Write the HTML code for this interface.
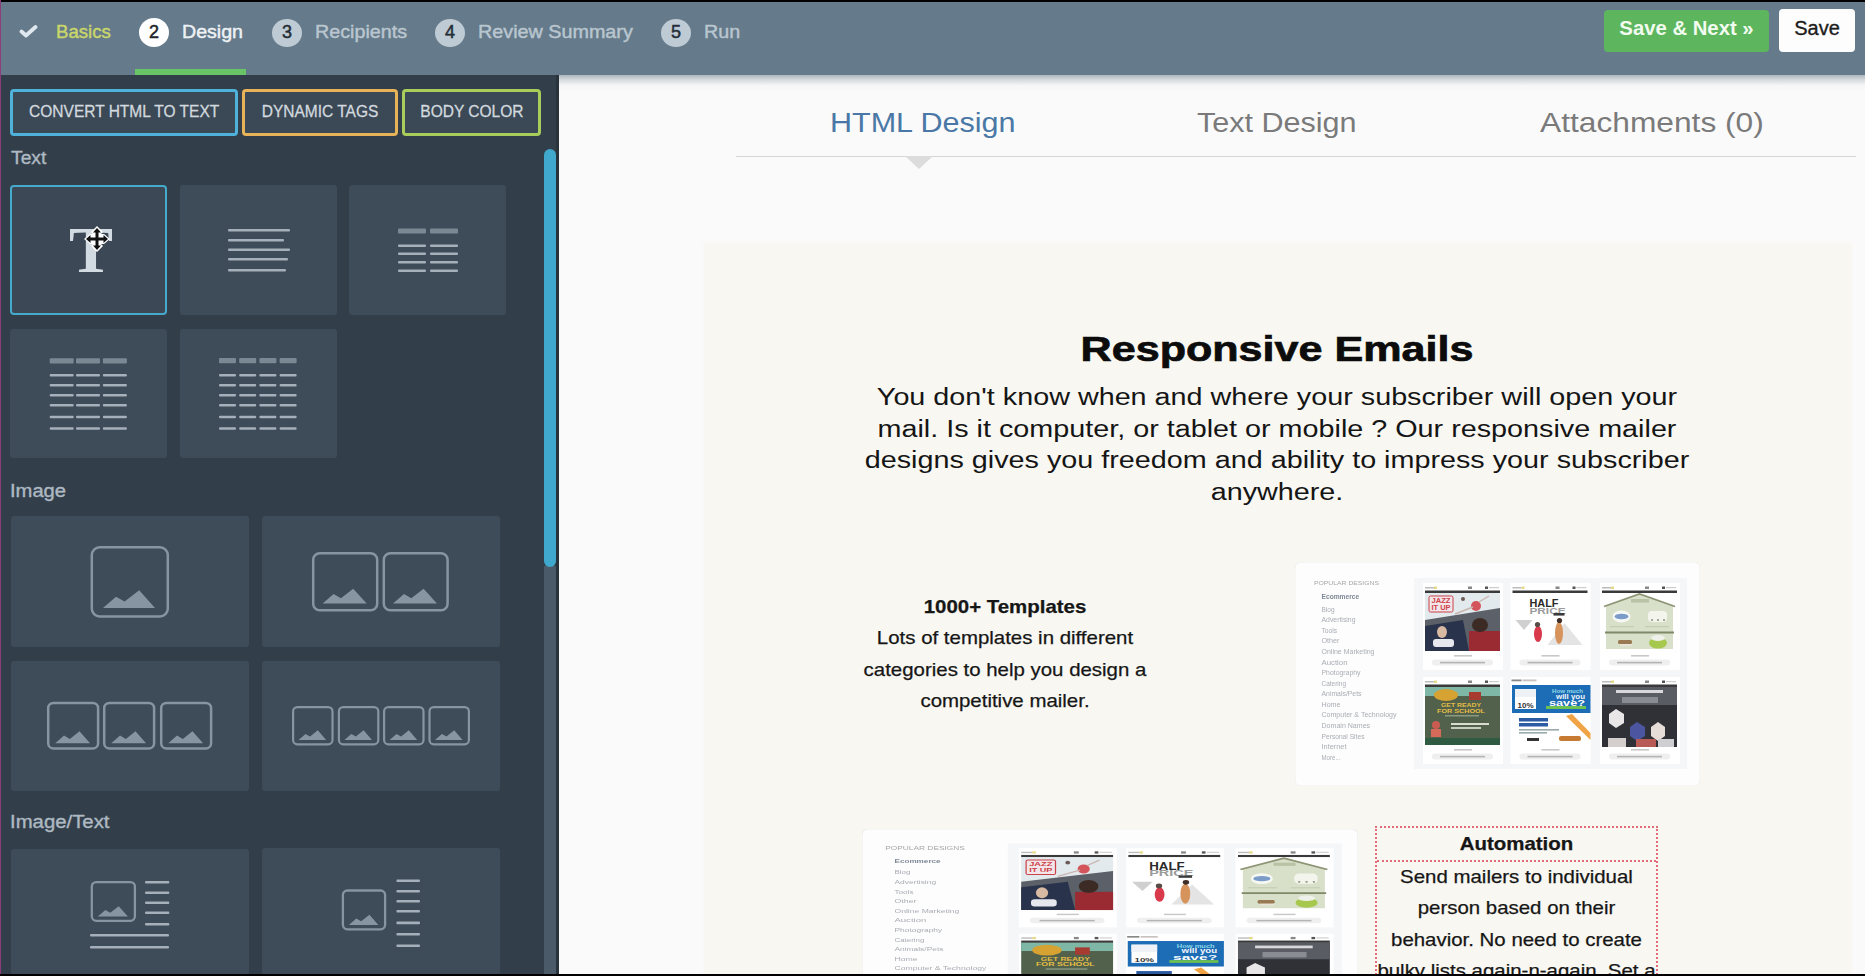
<!DOCTYPE html>
<html><head><meta charset="utf-8">
<style>
*{margin:0;padding:0;box-sizing:border-box}
html,body{width:1865px;height:976px;overflow:hidden;background:#000;font-family:"Liberation Sans",sans-serif}
.a{position:absolute}
#root{position:absolute;left:0;top:0;width:1865px;height:976px;overflow:hidden;background:#fafafa}
#topb{left:0;top:0;width:1865px;height:2px;background:#000}
#botb{left:0;top:974px;width:1865px;height:2px;background:#000}
#lb{left:0;top:0;width:1px;height:976px;background:#8a3d78}
#hdr{left:1px;top:2px;width:1864px;height:73px;background:#657a8a}
.step{position:absolute;top:0;height:72px;font-size:19px;line-height:72px;white-space:nowrap}
.circ{position:absolute;top:15px;width:30px;height:28px;border-radius:50%;background:#bfcbd4;color:#252e38;font-size:18px;line-height:27px;text-align:center;-webkit-text-stroke:0.5px currentColor}
.stxt{position:absolute;top:15.5px;line-height:32px;font-size:18.6px;color:#b9c6cf;white-space:nowrap;-webkit-text-stroke:0.45px currentColor}
#side{left:1px;top:75px;width:558px;height:899px;background:#323f4b}
.btn{position:absolute;border:3px solid;border-radius:4px;background:#3b4855;color:#d2d9df;font-size:16.5px;text-align:center;line-height:39px;white-space:nowrap}
.btn span{display:inline-block;transform:scaleX(0.94);-webkit-text-stroke:0.3px currentColor}
.lbl{position:absolute;color:#aeb9c2;font-size:18px;white-space:nowrap;transform:scaleX(1.07);transform-origin:0 0;-webkit-text-stroke:0.35px currentColor}
.tile{position:absolute;background:#3e4b58;border-radius:3px}
.ln{position:absolute;height:3px;background:#a8b3bd;border-radius:1px}
.hd{position:absolute;height:5px;background:#687886}
#content{left:559px;top:75px;width:1306px;height:899px;background:#fafafa}
.tab{position:absolute;top:103px;font-size:27.5px;line-height:40px;white-space:nowrap;color:#7a7a7a;transform-origin:0 0}
</style></head><body>
<div id="root">
<div id="hdr" class="a"></div>
<div id="topb" class="a"></div>
<div id="lb" class="a"></div>

<!-- steps -->
<svg class="a" style="left:19px;top:24px" width="20" height="15" viewBox="0 0 20 15"><path d="M2.5 7.5 L7 11.5 L16.5 3" fill="none" stroke="#dfe8ee" stroke-width="3.8" stroke-linecap="round" stroke-linejoin="round"/></svg>
<div class="stxt" style="left:56px;color:#c9d66b">Basics</div>
<div class="circ" style="left:139px;top:18px;height:29px;line-height:28px;background:#fff;color:#1d232a">2</div>
<div class="stxt" style="left:182px;color:#eef2f5;transform:scaleX(1.054);transform-origin:0 0">Design</div>
<div class="a" style="left:135px;top:69px;width:111px;height:6px;background:#69c468"></div>
<div class="circ" style="left:272px;top:18.5px">3</div>
<div class="stxt" style="left:315px;transform:scaleX(1.06);transform-origin:0 0">Recipients</div>
<div class="circ" style="left:435px;top:18.5px">4</div>
<div class="stxt" style="left:478px;transform:scaleX(1.0625);transform-origin:0 0">Review Summary</div>
<div class="circ" style="left:661px;top:18.5px">5</div>
<div class="stxt" style="left:704px;transform:scaleX(1.06);transform-origin:0 0">Run</div>

<div class="a" style="left:1604px;top:10px;width:165px;height:42px;background:#5db65e;border-radius:4px;color:#f2fbef;font-weight:bold;font-size:20.5px;line-height:36px;text-align:center"><div style="transform:scaleX(0.99)">Save &amp; Next &raquo;</div></div>
<div class="a" style="left:1779px;top:9px;width:76px;height:43px;background:#fdfdfd;border-radius:4px;color:#1c1c1c;font-size:20px;line-height:38px;text-align:center;-webkit-text-stroke:0.35px currentColor">Save</div>

<!-- sidebar -->
<div id="side" class="a"></div>
<div class="btn" style="left:10px;top:89px;width:228px;height:47px;border-color:#4fb2da"><span>CONVERT HTML TO TEXT</span></div>
<div class="btn" style="left:242px;top:89px;width:156px;height:47px;border-color:#e8b259"><span>DYNAMIC TAGS</span></div>
<div class="btn" style="left:402px;top:89px;width:139px;height:47px;border-color:#a9cd5a"><span>BODY COLOR</span></div>

<div class="lbl" style="left:11px;top:147.5px">Text</div>
<div class="lbl" style="left:10px;top:480.5px;transform:scaleX(1.12)">Image</div>
<div class="lbl" style="left:10px;top:812px;transform:scaleX(1.13)">Image/Text</div>

<!--SIDE-->
<div class="tile" style="left:10px;top:185px;width:157px;height:130px;background:#3c4855;border:2px solid #46abcb;border-radius:4px"></div>
<div class="tile" style="left:180px;top:185px;width:157px;height:130px;"></div>
<div class="tile" style="left:349px;top:185px;width:157px;height:130px;"></div>
<div class="tile" style="left:10px;top:329px;width:157px;height:129px;"></div>
<div class="tile" style="left:180px;top:329px;width:157px;height:129px;"></div>
<div class="tile" style="left:11px;top:516px;width:238px;height:131px;"></div>
<div class="tile" style="left:262px;top:516px;width:238px;height:131px;"></div>
<div class="tile" style="left:11px;top:661px;width:238px;height:130px;"></div>
<div class="tile" style="left:262px;top:661px;width:238px;height:130px;"></div>
<div class="tile" style="left:11px;top:849px;width:238px;height:130px;"></div>
<div class="tile" style="left:262px;top:848px;width:238px;height:130px;"></div>
<svg class="a" style="left:0;top:0" width="560" height="976"><rect x="228" y="229" width="62" height="2.6" fill="#a5b0ba" rx="1"/><rect x="228" y="239" width="56" height="2.6" fill="#a5b0ba" rx="1"/><rect x="228" y="248.5" width="62" height="2.6" fill="#a5b0ba" rx="1"/><rect x="228" y="258" width="60" height="2.6" fill="#a5b0ba" rx="1"/><rect x="228" y="269" width="58" height="2.6" fill="#a5b0ba" rx="1"/><rect x="398" y="228.5" width="28" height="5" fill="#7a8894" rx="1"/><rect x="398" y="244.5" width="28" height="2.6" fill="#a5b0ba" rx="1"/><rect x="398" y="252.5" width="28" height="2.6" fill="#a5b0ba" rx="1"/><rect x="398" y="261" width="28" height="2.6" fill="#a5b0ba" rx="1"/><rect x="398" y="269.5" width="28" height="2.6" fill="#a5b0ba" rx="1"/><rect x="430" y="228.5" width="28" height="5" fill="#7a8894" rx="1"/><rect x="430" y="244.5" width="28" height="2.6" fill="#a5b0ba" rx="1"/><rect x="430" y="252.5" width="28" height="2.6" fill="#a5b0ba" rx="1"/><rect x="430" y="261" width="28" height="2.6" fill="#a5b0ba" rx="1"/><rect x="430" y="269.5" width="28" height="2.6" fill="#a5b0ba" rx="1"/><rect x="49.7" y="358.3" width="24" height="5.2" fill="#7a8894" rx="1"/><rect x="49.7" y="374" width="24" height="2.6" fill="#a5b0ba" rx="1"/><rect x="49.7" y="384" width="24" height="2.6" fill="#a5b0ba" rx="1"/><rect x="49.7" y="394" width="24" height="2.6" fill="#a5b0ba" rx="1"/><rect x="49.7" y="404" width="24" height="2.6" fill="#a5b0ba" rx="1"/><rect x="49.7" y="415.7" width="24" height="2.6" fill="#a5b0ba" rx="1"/><rect x="49.7" y="427.2" width="24" height="2.6" fill="#a5b0ba" rx="1"/><rect x="76" y="358.3" width="24" height="5.2" fill="#7a8894" rx="1"/><rect x="76" y="374" width="24" height="2.6" fill="#a5b0ba" rx="1"/><rect x="76" y="384" width="24" height="2.6" fill="#a5b0ba" rx="1"/><rect x="76" y="394" width="24" height="2.6" fill="#a5b0ba" rx="1"/><rect x="76" y="404" width="24" height="2.6" fill="#a5b0ba" rx="1"/><rect x="76" y="415.7" width="24" height="2.6" fill="#a5b0ba" rx="1"/><rect x="76" y="427.2" width="24" height="2.6" fill="#a5b0ba" rx="1"/><rect x="102.9" y="358.3" width="24" height="5.2" fill="#7a8894" rx="1"/><rect x="102.9" y="374" width="24" height="2.6" fill="#a5b0ba" rx="1"/><rect x="102.9" y="384" width="24" height="2.6" fill="#a5b0ba" rx="1"/><rect x="102.9" y="394" width="24" height="2.6" fill="#a5b0ba" rx="1"/><rect x="102.9" y="404" width="24" height="2.6" fill="#a5b0ba" rx="1"/><rect x="102.9" y="415.7" width="24" height="2.6" fill="#a5b0ba" rx="1"/><rect x="102.9" y="427.2" width="24" height="2.6" fill="#a5b0ba" rx="1"/><rect x="219.0" y="358" width="17" height="5.2" fill="#7a8894" rx="1"/><rect x="219.0" y="374" width="17" height="2.6" fill="#a5b0ba" rx="1"/><rect x="219.0" y="384" width="17" height="2.6" fill="#a5b0ba" rx="1"/><rect x="219.0" y="394" width="17" height="2.6" fill="#a5b0ba" rx="1"/><rect x="219.0" y="404" width="17" height="2.6" fill="#a5b0ba" rx="1"/><rect x="219.0" y="415.7" width="17" height="2.6" fill="#a5b0ba" rx="1"/><rect x="219.0" y="427.2" width="17" height="2.6" fill="#a5b0ba" rx="1"/><rect x="239.2" y="358" width="17" height="5.2" fill="#7a8894" rx="1"/><rect x="239.2" y="374" width="17" height="2.6" fill="#a5b0ba" rx="1"/><rect x="239.2" y="384" width="17" height="2.6" fill="#a5b0ba" rx="1"/><rect x="239.2" y="394" width="17" height="2.6" fill="#a5b0ba" rx="1"/><rect x="239.2" y="404" width="17" height="2.6" fill="#a5b0ba" rx="1"/><rect x="239.2" y="415.7" width="17" height="2.6" fill="#a5b0ba" rx="1"/><rect x="239.2" y="427.2" width="17" height="2.6" fill="#a5b0ba" rx="1"/><rect x="259.4" y="358" width="17" height="5.2" fill="#7a8894" rx="1"/><rect x="259.4" y="374" width="17" height="2.6" fill="#a5b0ba" rx="1"/><rect x="259.4" y="384" width="17" height="2.6" fill="#a5b0ba" rx="1"/><rect x="259.4" y="394" width="17" height="2.6" fill="#a5b0ba" rx="1"/><rect x="259.4" y="404" width="17" height="2.6" fill="#a5b0ba" rx="1"/><rect x="259.4" y="415.7" width="17" height="2.6" fill="#a5b0ba" rx="1"/><rect x="259.4" y="427.2" width="17" height="2.6" fill="#a5b0ba" rx="1"/><rect x="279.6" y="358" width="17" height="5.2" fill="#7a8894" rx="1"/><rect x="279.6" y="374" width="17" height="2.6" fill="#a5b0ba" rx="1"/><rect x="279.6" y="384" width="17" height="2.6" fill="#a5b0ba" rx="1"/><rect x="279.6" y="394" width="17" height="2.6" fill="#a5b0ba" rx="1"/><rect x="279.6" y="404" width="17" height="2.6" fill="#a5b0ba" rx="1"/><rect x="279.6" y="415.7" width="17" height="2.6" fill="#a5b0ba" rx="1"/><rect x="279.6" y="427.2" width="17" height="2.6" fill="#a5b0ba" rx="1"/><rect x="91.8" y="547.2" width="76.0" height="69.2" rx="7.9" fill="none" stroke="#8795a3" stroke-width="2.5"/><polygon points="103.0,608.0 116.0,596.7 124.6,601.6 139.2,590.2 155.0,608.0" fill="#8795a3"/><rect x="313.2" y="553.2" width="64.0" height="57.1" rx="6.6" fill="none" stroke="#8795a3" stroke-width="2.5"/><polygon points="322.6,603.6 333.6,594.1 340.9,598.2 353.2,588.7 366.7,603.6" fill="#8795a3"/><rect x="383.8" y="553.2" width="63.8" height="57.1" rx="6.6" fill="none" stroke="#8795a3" stroke-width="2.5"/><polygon points="393.0,603.6 404.0,594.1 411.3,598.2 423.6,588.7 437.0,603.6" fill="#8795a3"/><rect x="48.2" y="702.9" width="49.9" height="45.6" rx="5.3" fill="none" stroke="#8795a3" stroke-width="2.5"/><polygon points="55.3,743.2 64.0,735.6 69.8,738.9 79.5,731.2 90.1,743.2" fill="#8795a3"/><rect x="104.2" y="702.9" width="49.9" height="45.6" rx="5.3" fill="none" stroke="#8795a3" stroke-width="2.5"/><polygon points="111.3,743.2 120.0,735.6 125.8,738.9 135.5,731.2 146.1,743.2" fill="#8795a3"/><rect x="161.2" y="702.9" width="49.9" height="45.6" rx="5.3" fill="none" stroke="#8795a3" stroke-width="2.5"/><polygon points="168.3,743.2 177.0,735.6 182.8,738.9 192.5,731.2 203.1,743.2" fill="#8795a3"/><rect x="293.1" y="707.1" width="39.4" height="37.2" rx="4.3" fill="none" stroke="#8795a3" stroke-width="2.2"/><polygon points="298.6,740.1 305.5,733.9 310.1,736.5 317.8,730.3 326.2,740.1" fill="#8795a3"/><rect x="338.9" y="707.1" width="39.4" height="37.2" rx="4.3" fill="none" stroke="#8795a3" stroke-width="2.2"/><polygon points="344.4,740.1 351.3,733.9 355.9,736.5 363.6,730.3 372.0,740.1" fill="#8795a3"/><rect x="384.1" y="707.1" width="39.4" height="37.2" rx="4.3" fill="none" stroke="#8795a3" stroke-width="2.2"/><polygon points="389.6,740.1 396.5,733.9 401.1,736.5 408.8,730.3 417.2,740.1" fill="#8795a3"/><rect x="429.5" y="707.1" width="39.4" height="37.2" rx="4.3" fill="none" stroke="#8795a3" stroke-width="2.2"/><polygon points="435.0,740.1 441.9,733.9 446.5,736.5 454.2,730.3 462.6,740.1" fill="#8795a3"/><rect x="91.8" y="882.1" width="43.1" height="38.7" rx="4.5" fill="none" stroke="#8795a3" stroke-width="2.3"/><polygon points="97.8,916.5 105.4,910.0 110.3,912.8 118.7,906.3 127.9,916.5" fill="#8795a3"/><rect x="145" y="881" width="24.3" height="2.6" fill="#a5b0ba" rx="1"/><rect x="145" y="891.5" width="24.3" height="2.6" fill="#a5b0ba" rx="1"/><rect x="145" y="901.5" width="24.3" height="2.6" fill="#a5b0ba" rx="1"/><rect x="145" y="911.5" width="24.3" height="2.6" fill="#a5b0ba" rx="1"/><rect x="145" y="923" width="24.3" height="2.6" fill="#a5b0ba" rx="1"/><rect x="90" y="934" width="79" height="2.6" fill="#a5b0ba" rx="1"/><rect x="90" y="946" width="79" height="2.6" fill="#a5b0ba" rx="1"/><rect x="342.9" y="890.5" width="42.2" height="38.8" rx="4.5" fill="none" stroke="#8795a3" stroke-width="2.3"/><polygon points="348.9,925.0 356.3,918.5 361.2,921.3 369.4,914.7 378.4,925.0" fill="#8795a3"/><rect x="396.4" y="879.5" width="23.6" height="2.6" fill="#a5b0ba" rx="1"/><rect x="396.4" y="890" width="23.6" height="2.6" fill="#a5b0ba" rx="1"/><rect x="396.4" y="900" width="23.6" height="2.6" fill="#a5b0ba" rx="1"/><rect x="396.4" y="910" width="23.6" height="2.6" fill="#a5b0ba" rx="1"/><rect x="396.4" y="921.6" width="23.6" height="2.6" fill="#a5b0ba" rx="1"/><rect x="396.4" y="933" width="23.6" height="2.6" fill="#a5b0ba" rx="1"/><rect x="396.4" y="944.5" width="23.6" height="2.6" fill="#a5b0ba" rx="1"/></svg>

<!--/SIDE-->
<div class="a" id="bigT" style="left:61px;top:209.5px;width:60px;text-align:center;font-family:'Liberation Serif',serif;font-weight:bold;font-size:66px;line-height:80px;color:#d3dbe2">T</div>
<svg class="a" style="left:83px;top:225px" width="28" height="28" viewBox="0 0 28 28">
<path d="M14 1 L20 7 L18 9 L21 9 L27 14 L21 19 L18 19 L20 21 L14 27 L8 21 L10 19 L7 19 L1 14 L7 9 L10 9 L8 7 Z" fill="#fff"/>
<path d="M14 3 L18 7.5 L15.5 7.5 L15.5 12.5 L20.5 12.5 L20.5 10 L25 14 L20.5 18 L20.5 15.5 L15.5 15.5 L15.5 20.5 L18 20.5 L14 25 L10 20.5 L12.5 20.5 L12.5 15.5 L7.5 15.5 L7.5 18 L3 14 L7.5 10 L7.5 12.5 L12.5 12.5 L12.5 7.5 L10 7.5 Z" fill="#111"/>
</svg>
<!-- scrollbar -->
<div class="a" style="left:544px;top:566px;width:12px;height:408px;background:#4b5a68"></div>
<div class="a" style="left:544px;top:149px;width:12px;height:418px;background:#3fa8cc;border-radius:6px"></div>
<div class="a" style="left:556px;top:75px;width:3px;height:899px;background:#28333c"></div>

<!-- content -->
<div id="content" class="a"></div>
<div class="a" style="left:559px;top:75px;width:1306px;height:17px;background:linear-gradient(rgba(90,110,125,0.48),rgba(90,110,125,0.22) 30%,rgba(150,175,200,0.06) 60%,rgba(150,175,200,0))"></div>
<div class="tab" style="left:830px;color:#4a78a6;transform:scaleX(1.11)">HTML Design</div>
<div class="tab" style="left:1197px;transform:scaleX(1.11)">Text Design</div>
<div class="tab" style="left:1540px;transform:scaleX(1.153)">Attachments (0)</div>
<div class="a" style="left:736px;top:155.5px;width:1120px;height:1.5px;background:#d6d6d6"></div>
<svg class="a" style="left:905px;top:156px" width="28" height="13"><path d="M0 0 L28 0 L14 13 Z" fill="#dcdcdc"/></svg>

<div id="email" class="a" style="left:704px;top:243px;width:1147px;height:731px;background:#f8f7f2;box-shadow:0 0 3px 1px #f9f8f5"></div>

<div class="a" id="h1" style="left:709px;top:323.5px;-webkit-text-stroke:0.7px #0c0c0c;width:1136px;transform:scaleX(1.231);transform-origin:568px 0;text-align:center;font-weight:bold;font-size:35px;line-height:50px;color:#0c0c0c">Responsive Emails</div>
<div class="a" id="para" style="left:709px;top:382px;width:1136px;transform:scaleX(1.25);transform-origin:568px 0;text-align:center;font-size:23px;line-height:31.7px;color:#151515">You don't know when and where your subscriber will open your<br>mail. Is it computer, or tablet or mobile ? Our responsive mailer<br>designs gives you freedom and ability to impress your subscriber<br>anywhere.</div>

<div class="a" id="tpl" style="left:805px;top:590.5px;width:400px;transform:scaleX(1.075);text-align:center;font-size:19px;line-height:31.5px;color:#161616;-webkit-text-stroke:0.25px #161616"><b>1000+ Templates</b><br>Lots of templates in different<br>categories to help you design a<br>competitive mailer.</div>

<!--TPL-->
<svg class="a" style="left:1295px;top:562px;filter:blur(0.5px)" width="405" height="224" viewBox="0 0 405 224"><rect x="0" y="0" width="405" height="224" rx="6" fill="#fdfdfd" stroke="#efefed" stroke-width="1"/><text x="19" y="23" font-family="Liberation Sans" font-size="6" fill="#a6a6a8" textLength="65" lengthAdjust="spacingAndGlyphs">POPULAR DESIGNS</text><text x="26.5" y="36.9" font-family="Liberation Sans" font-weight="bold" font-size="6.5" fill="#7d8796" textLength="37.7" lengthAdjust="spacingAndGlyphs">Ecommerce</text><text x="26.5" y="49.7" font-family="Liberation Sans" font-weight="normal" font-size="6.5" fill="#a9adb3" textLength="13" lengthAdjust="spacingAndGlyphs">Blog</text><text x="26.5" y="60.0" font-family="Liberation Sans" font-weight="normal" font-size="6.5" fill="#a9adb3" textLength="34" lengthAdjust="spacingAndGlyphs">Advertising</text><text x="26.5" y="70.9" font-family="Liberation Sans" font-weight="normal" font-size="6.5" fill="#a9adb3" textLength="15.6" lengthAdjust="spacingAndGlyphs">Tools</text><text x="26.5" y="81.2" font-family="Liberation Sans" font-weight="normal" font-size="6.5" fill="#a9adb3" textLength="18" lengthAdjust="spacingAndGlyphs">Other</text><text x="26.5" y="91.7" font-family="Liberation Sans" font-weight="normal" font-size="6.5" fill="#a9adb3" textLength="53" lengthAdjust="spacingAndGlyphs">Online Marketing</text><text x="26.5" y="102.5" font-family="Liberation Sans" font-weight="normal" font-size="6.5" fill="#a9adb3" textLength="26" lengthAdjust="spacingAndGlyphs">Auction</text><text x="26.5" y="112.9" font-family="Liberation Sans" font-weight="normal" font-size="6.5" fill="#a9adb3" textLength="39" lengthAdjust="spacingAndGlyphs">Photography</text><text x="26.5" y="123.8" font-family="Liberation Sans" font-weight="normal" font-size="6.5" fill="#a9adb3" textLength="24.5" lengthAdjust="spacingAndGlyphs">Catering</text><text x="26.5" y="134.2" font-family="Liberation Sans" font-weight="normal" font-size="6.5" fill="#a9adb3" textLength="40" lengthAdjust="spacingAndGlyphs">Animals/Pets</text><text x="26.5" y="144.5" font-family="Liberation Sans" font-weight="normal" font-size="6.5" fill="#a9adb3" textLength="19" lengthAdjust="spacingAndGlyphs">Home</text><text x="26.5" y="155.2" font-family="Liberation Sans" font-weight="normal" font-size="6.5" fill="#a9adb3" textLength="75" lengthAdjust="spacingAndGlyphs">Computer &amp; Technology</text><text x="26.5" y="166.2" font-family="Liberation Sans" font-weight="normal" font-size="6.5" fill="#a9adb3" textLength="48.6" lengthAdjust="spacingAndGlyphs">Domain Names</text><text x="26.5" y="176.6" font-family="Liberation Sans" font-weight="normal" font-size="6.5" fill="#a9adb3" textLength="43" lengthAdjust="spacingAndGlyphs">Personal Sites</text><text x="26.5" y="187.0" font-family="Liberation Sans" font-weight="normal" font-size="6.5" fill="#a9adb3" textLength="25" lengthAdjust="spacingAndGlyphs">Internet</text><text x="26.5" y="197.8" font-family="Liberation Sans" font-weight="normal" font-size="6.5" fill="#a9adb3" textLength="19" lengthAdjust="spacingAndGlyphs">More...</text><rect x="119" y="16" width="273" height="191" fill="#f5f6f8"/><rect x="128" y="21" width="80" height="87" fill="#ffffff"/><rect x="130" y="25" width="9" height="1.5" fill="#bbb"/><rect x="139" y="24.5" width="3" height="2.5" fill="#e5d98a"/><rect x="173" y="24.5" width="4" height="2.5" fill="#888"/><rect x="190" y="24.5" width="3" height="2.5" fill="#555"/><rect x="194" y="25" width="10" height="1.2" fill="#ccc"/><rect x="130" y="28.5" width="75" height="2.5" fill="#3a3a3a"/><g transform="translate(130,31)"><rect width="75" height="58" fill="#e2eaed"/>
<polygon points="0,27 75,15 75,58 0,58" fill="#5c6068"/>
<polygon points="0,33 38,27 44,58 0,58" fill="#29334b"/>
<ellipse cx="17" cy="39" rx="5" ry="6" fill="#d8b9a2"/>
<rect x="8" y="46" width="21" height="8" rx="3" fill="#e6e8ee"/>
<rect x="44" y="38" width="31" height="20" fill="#9b2b33"/>
<ellipse cx="55" cy="32" rx="8" ry="7" fill="#3b2b24"/>
<rect x="4" y="3" width="24" height="16" rx="1.5" fill="#f3e6e8" stroke="#c9414b" stroke-width="1"/>
<text x="6.5" y="10" font-family="Liberation Sans" font-weight="bold" font-size="6.5" fill="#cf3f4a" textLength="19" lengthAdjust="spacingAndGlyphs">JAZZ</text>
<text x="6.5" y="16.5" font-family="Liberation Sans" font-weight="bold" font-size="6.5" fill="#cf3f4a" textLength="19" lengthAdjust="spacingAndGlyphs">IT UP</text>
<circle cx="51" cy="13" r="5" fill="#d3555b"/>
<path d="M30 21 L48 14 M54 9 L64 3" stroke="#c9b5b0" stroke-width="1.4"/>
<circle cx="38" cy="6" r="2" fill="#6b5a55"/></g><rect x="159" y="93" width="18" height="1.6" fill="#c8c8c8"/><rect x="137" y="97.5" width="61" height="6" rx="3" fill="#efefef"/><rect x="145" y="99.8" width="45" height="1.6" fill="#b4b4b4"/><rect x="215.5" y="21" width="80" height="87" fill="#ffffff"/><rect x="217.5" y="25" width="9" height="1.5" fill="#bbb"/><rect x="226.5" y="24.5" width="3" height="2.5" fill="#e5d98a"/><rect x="260.5" y="24.5" width="4" height="2.5" fill="#888"/><rect x="277.5" y="24.5" width="3" height="2.5" fill="#555"/><rect x="281.5" y="25" width="10" height="1.2" fill="#ccc"/><rect x="217.5" y="28.5" width="75" height="2.5" fill="#3a3a3a"/><g transform="translate(217.5,31)"><rect width="75" height="58" fill="#ffffff"/>
<text x="17" y="13.5" font-family="Liberation Sans" font-weight="bold" font-size="11" fill="#2a2a2a" textLength="29" lengthAdjust="spacingAndGlyphs">HALF</text>
<text x="17" y="20.5" font-family="Liberation Sans" font-weight="bold" font-size="9" fill="#9a9a9a" textLength="36" lengthAdjust="spacingAndGlyphs">PRICE</text>
<rect x="41" y="20" width="11" height="2.6" fill="#3a3a3a"/>
<polygon points="3,27 20,27 11.5,37" fill="#d0d0d0"/>
<polygon points="35,52 52,30 70,52" fill="#e4e4e4"/>
<ellipse cx="25.5" cy="41" rx="4" ry="8" fill="#d8394b"/>
<circle cx="25" cy="31.5" r="2.6" fill="#5a4a45"/>
<ellipse cx="46.5" cy="40" rx="4" ry="11" fill="#d7935c"/>
<circle cx="47" cy="27.5" r="2.6" fill="#3e2e28"/></g><rect x="246.5" y="93" width="18" height="1.6" fill="#c8c8c8"/><rect x="224.5" y="97.5" width="61" height="6" rx="3" fill="#efefef"/><rect x="232.5" y="99.8" width="45" height="1.6" fill="#b4b4b4"/><rect x="305" y="21" width="80" height="87" fill="#ffffff"/><rect x="307" y="25" width="9" height="1.5" fill="#bbb"/><rect x="316" y="24.5" width="3" height="2.5" fill="#e5d98a"/><rect x="350" y="24.5" width="4" height="2.5" fill="#888"/><rect x="367" y="24.5" width="3" height="2.5" fill="#555"/><rect x="371" y="25" width="10" height="1.2" fill="#ccc"/><rect x="307" y="28.5" width="75" height="2.5" fill="#3a3a3a"/><g transform="translate(307,31)"><rect width="75" height="58" fill="#ffffff"/>
<polygon points="4,13 37.5,1.5 71,13 71,56 4,56" fill="#d9e0ca"/>
<path d="M2 13.5 L37.5 1 L73 13.5" fill="none" stroke="#8c9474" stroke-width="1.8"/>
<rect x="29" y="6" width="18" height="3.5" fill="#b8c2a4"/>
<line x1="3" y1="39.5" x2="72" y2="39.5" stroke="#7f8868" stroke-width="2"/>
<ellipse cx="19.5" cy="23.5" rx="9" ry="6" fill="#f6f8f4"/>
<ellipse cx="19.5" cy="23.5" rx="7" ry="2.8" fill="#7b9cc8"/>
<rect x="46" y="18" width="19" height="11" rx="4" fill="#f3f5ec"/>
<circle cx="50" cy="27" r="1" fill="#8a8f80"/><circle cx="56" cy="27" r="1" fill="#8a8f80"/><circle cx="62" cy="27" r="1" fill="#8a8f80"/>
<rect x="8" y="33" width="24" height="1.2" fill="#c4ccb4"/><rect x="43" y="33" width="24" height="1.2" fill="#c4ccb4"/>
<rect x="16" y="47" width="14" height="4" rx="1.5" fill="#9a7a52"/>
<rect x="18" y="51" width="12" height="2" fill="#e8e4d8"/>
<ellipse cx="56" cy="50" rx="9" ry="5.5" fill="#a6c84e"/>
<ellipse cx="56" cy="45" rx="7" ry="3" fill="#eef0ea"/></g><rect x="336" y="93" width="18" height="1.6" fill="#c8c8c8"/><rect x="314" y="97.5" width="61" height="6" rx="3" fill="#efefef"/><rect x="322" y="99.8" width="45" height="1.6" fill="#b4b4b4"/><rect x="128" y="115" width="80" height="87" fill="#ffffff"/><rect x="130" y="119" width="9" height="1.5" fill="#bbb"/><rect x="139" y="118.5" width="3" height="2.5" fill="#e5d98a"/><rect x="173" y="118.5" width="4" height="2.5" fill="#888"/><rect x="190" y="118.5" width="3" height="2.5" fill="#555"/><rect x="194" y="119" width="10" height="1.2" fill="#ccc"/><rect x="130" y="122.5" width="75" height="2.5" fill="#3a3a3a"/><g transform="translate(130,125)"><rect width="75" height="58" fill="#52614b"/>
<rect width="75" height="9" fill="#7eb7a6"/>
<ellipse cx="21" cy="8" rx="12" ry="6" fill="#d6a232"/>
<rect x="44" y="5" width="12" height="8" fill="#a83b31"/>
<text x="16" y="19.5" font-family="Liberation Sans" font-weight="bold" font-size="6" fill="#e6bd45" textLength="40" lengthAdjust="spacingAndGlyphs">GET READY</text>
<text x="12" y="25.5" font-family="Liberation Sans" font-weight="bold" font-size="6" fill="#e6bd45" textLength="48" lengthAdjust="spacingAndGlyphs">FOR SCHOOL</text>
<rect x="20" y="28" width="34" height="1.5" fill="#8a9a80"/>
<circle cx="11" cy="38" r="4" fill="#c95b51"/>
<rect x="6" y="42" width="10" height="8" fill="#d46a5a"/>
<rect x="26" y="36" width="38" height="2" fill="#d8dcd0"/>
<rect x="26" y="40" width="30" height="2" fill="#c8ccc0"/>
<rect y="51" width="75" height="7" fill="#2e5b42"/></g><rect x="159" y="187" width="18" height="1.6" fill="#c8c8c8"/><rect x="137" y="191.5" width="61" height="6" rx="3" fill="#efefef"/><rect x="145" y="193.8" width="45" height="1.6" fill="#b4b4b4"/><rect x="215.5" y="115" width="80" height="87" fill="#ffffff"/><rect x="216.5" y="117.5" width="10" height="1.8" fill="#888"/><rect x="227.5" y="117.5" width="14" height="1.8" fill="#c9c0c0"/><g transform="translate(217.0,123)"><rect width="78.5" height="60" fill="#ffffff"/>
<rect width="78.5" height="28" fill="#1d6db6"/>
<rect x="3" y="4" width="21" height="20" fill="#ffffff"/>
<rect x="3" y="4" width="21" height="8" fill="#eef2f6"/>
<text x="5.5" y="22.5" font-family="Liberation Sans" font-weight="bold" font-size="6.5" fill="#333" textLength="16" lengthAdjust="spacingAndGlyphs">10%</text>
<text x="40" y="7.5" font-family="Liberation Sans" font-weight="bold" font-size="5" fill="#8fd8e8" textLength="31" lengthAdjust="spacingAndGlyphs">How much</text>
<text x="44" y="13.5" font-family="Liberation Sans" font-weight="bold" font-size="7" fill="#f2f6fb" textLength="29" lengthAdjust="spacingAndGlyphs">will you</text>
<text x="37" y="20.5" font-family="Liberation Sans" font-weight="bold" font-size="8.5" fill="#ffffff" textLength="36" lengthAdjust="spacingAndGlyphs">save?</text>
<rect x="34" y="21" width="40" height="3" fill="#6cc150"/>
<polygon points="54,31 60,29 78.5,48 78.5,55" fill="#f0a445"/>
<rect x="7" y="33" width="29" height="3.5" fill="#2b5ba2"/>
<rect x="7" y="38" width="29" height="3.5" fill="#2b5ba2"/>
<rect x="7" y="44" width="40" height="1.6" fill="#9aa"/>
<rect x="7" y="47" width="28" height="1.6" fill="#9aa"/>
<rect x="47" y="51" width="22" height="5" rx="2" fill="#c77b32"/>
<rect x="15" y="53" width="12" height="3" fill="#333"/></g><rect x="246.5" y="187" width="18" height="1.6" fill="#c8c8c8"/><rect x="224.5" y="191.5" width="61" height="6" rx="3" fill="#efefef"/><rect x="232.5" y="193.8" width="45" height="1.6" fill="#b4b4b4"/><rect x="305" y="115" width="80" height="87" fill="#ffffff"/><rect x="307" y="119" width="9" height="1.5" fill="#bbb"/><rect x="316" y="118.5" width="3" height="2.5" fill="#e5d98a"/><rect x="350" y="118.5" width="4" height="2.5" fill="#888"/><rect x="367" y="118.5" width="3" height="2.5" fill="#555"/><rect x="371" y="119" width="10" height="1.2" fill="#ccc"/><rect x="307" y="122.5" width="75" height="2.5" fill="#3a3a3a"/><g transform="translate(307,125)"><rect width="75" height="60" fill="#2f3137"/>
<rect width="75" height="18" fill="#5a5c63"/>
<rect x="14" y="3" width="47" height="3" fill="#d8d8dc"/>
<rect x="20" y="10" width="36" height="6" fill="#8a8c94"/>
<polygon points="7,27 14,22 22,27 22,36 14,41 7,36" fill="#e8e6e6"/>
<polygon points="28,40 35,35 43,40 43,49 35,54 28,49" fill="#4c56a0"/>
<polygon points="49,40 56,35 63,40 63,49 56,54 49,49" fill="#e6dcd8"/>
<rect x="6" y="51" width="18" height="9" fill="#d4cfcc"/>
<rect x="34" y="52" width="20" height="8" fill="#b85a55"/>
<rect x="56" y="52" width="16" height="8" fill="#cfcfd2"/></g><rect x="336" y="187" width="18" height="1.6" fill="#c8c8c8"/><rect x="314" y="191.5" width="61" height="6" rx="3" fill="#efefef"/><rect x="322" y="193.8" width="45" height="1.6" fill="#b4b4b4"/></svg>
<svg class="a" style="left:862px;top:829px;filter:blur(0.5px)" width="496" height="204" viewBox="0 0 405 224" preserveAspectRatio="none"><rect x="0" y="0" width="405" height="224" rx="6" fill="#fdfdfd" stroke="#efefed" stroke-width="1"/><text x="19" y="23" font-family="Liberation Sans" font-size="6" fill="#a6a6a8" textLength="65" lengthAdjust="spacingAndGlyphs">POPULAR DESIGNS</text><text x="26.5" y="36.9" font-family="Liberation Sans" font-weight="bold" font-size="6.5" fill="#7d8796" textLength="37.7" lengthAdjust="spacingAndGlyphs">Ecommerce</text><text x="26.5" y="49.7" font-family="Liberation Sans" font-weight="normal" font-size="6.5" fill="#a9adb3" textLength="13" lengthAdjust="spacingAndGlyphs">Blog</text><text x="26.5" y="60.0" font-family="Liberation Sans" font-weight="normal" font-size="6.5" fill="#a9adb3" textLength="34" lengthAdjust="spacingAndGlyphs">Advertising</text><text x="26.5" y="70.9" font-family="Liberation Sans" font-weight="normal" font-size="6.5" fill="#a9adb3" textLength="15.6" lengthAdjust="spacingAndGlyphs">Tools</text><text x="26.5" y="81.2" font-family="Liberation Sans" font-weight="normal" font-size="6.5" fill="#a9adb3" textLength="18" lengthAdjust="spacingAndGlyphs">Other</text><text x="26.5" y="91.7" font-family="Liberation Sans" font-weight="normal" font-size="6.5" fill="#a9adb3" textLength="53" lengthAdjust="spacingAndGlyphs">Online Marketing</text><text x="26.5" y="102.5" font-family="Liberation Sans" font-weight="normal" font-size="6.5" fill="#a9adb3" textLength="26" lengthAdjust="spacingAndGlyphs">Auction</text><text x="26.5" y="112.9" font-family="Liberation Sans" font-weight="normal" font-size="6.5" fill="#a9adb3" textLength="39" lengthAdjust="spacingAndGlyphs">Photography</text><text x="26.5" y="123.8" font-family="Liberation Sans" font-weight="normal" font-size="6.5" fill="#a9adb3" textLength="24.5" lengthAdjust="spacingAndGlyphs">Catering</text><text x="26.5" y="134.2" font-family="Liberation Sans" font-weight="normal" font-size="6.5" fill="#a9adb3" textLength="40" lengthAdjust="spacingAndGlyphs">Animals/Pets</text><text x="26.5" y="144.5" font-family="Liberation Sans" font-weight="normal" font-size="6.5" fill="#a9adb3" textLength="19" lengthAdjust="spacingAndGlyphs">Home</text><text x="26.5" y="155.2" font-family="Liberation Sans" font-weight="normal" font-size="6.5" fill="#a9adb3" textLength="75" lengthAdjust="spacingAndGlyphs">Computer &amp; Technology</text><text x="26.5" y="166.2" font-family="Liberation Sans" font-weight="normal" font-size="6.5" fill="#a9adb3" textLength="48.6" lengthAdjust="spacingAndGlyphs">Domain Names</text><text x="26.5" y="176.6" font-family="Liberation Sans" font-weight="normal" font-size="6.5" fill="#a9adb3" textLength="43" lengthAdjust="spacingAndGlyphs">Personal Sites</text><text x="26.5" y="187.0" font-family="Liberation Sans" font-weight="normal" font-size="6.5" fill="#a9adb3" textLength="25" lengthAdjust="spacingAndGlyphs">Internet</text><text x="26.5" y="197.8" font-family="Liberation Sans" font-weight="normal" font-size="6.5" fill="#a9adb3" textLength="19" lengthAdjust="spacingAndGlyphs">More...</text><rect x="119" y="16" width="273" height="191" fill="#f5f6f8"/><rect x="128" y="21" width="80" height="87" fill="#ffffff"/><rect x="130" y="25" width="9" height="1.5" fill="#bbb"/><rect x="139" y="24.5" width="3" height="2.5" fill="#e5d98a"/><rect x="173" y="24.5" width="4" height="2.5" fill="#888"/><rect x="190" y="24.5" width="3" height="2.5" fill="#555"/><rect x="194" y="25" width="10" height="1.2" fill="#ccc"/><rect x="130" y="28.5" width="75" height="2.5" fill="#3a3a3a"/><g transform="translate(130,31)"><rect width="75" height="58" fill="#e2eaed"/>
<polygon points="0,27 75,15 75,58 0,58" fill="#5c6068"/>
<polygon points="0,33 38,27 44,58 0,58" fill="#29334b"/>
<ellipse cx="17" cy="39" rx="5" ry="6" fill="#d8b9a2"/>
<rect x="8" y="46" width="21" height="8" rx="3" fill="#e6e8ee"/>
<rect x="44" y="38" width="31" height="20" fill="#9b2b33"/>
<ellipse cx="55" cy="32" rx="8" ry="7" fill="#3b2b24"/>
<rect x="4" y="3" width="24" height="16" rx="1.5" fill="#f3e6e8" stroke="#c9414b" stroke-width="1"/>
<text x="6.5" y="10" font-family="Liberation Sans" font-weight="bold" font-size="6.5" fill="#cf3f4a" textLength="19" lengthAdjust="spacingAndGlyphs">JAZZ</text>
<text x="6.5" y="16.5" font-family="Liberation Sans" font-weight="bold" font-size="6.5" fill="#cf3f4a" textLength="19" lengthAdjust="spacingAndGlyphs">IT UP</text>
<circle cx="51" cy="13" r="5" fill="#d3555b"/>
<path d="M30 21 L48 14 M54 9 L64 3" stroke="#c9b5b0" stroke-width="1.4"/>
<circle cx="38" cy="6" r="2" fill="#6b5a55"/></g><rect x="159" y="93" width="18" height="1.6" fill="#c8c8c8"/><rect x="137" y="97.5" width="61" height="6" rx="3" fill="#efefef"/><rect x="145" y="99.8" width="45" height="1.6" fill="#b4b4b4"/><rect x="215.5" y="21" width="80" height="87" fill="#ffffff"/><rect x="217.5" y="25" width="9" height="1.5" fill="#bbb"/><rect x="226.5" y="24.5" width="3" height="2.5" fill="#e5d98a"/><rect x="260.5" y="24.5" width="4" height="2.5" fill="#888"/><rect x="277.5" y="24.5" width="3" height="2.5" fill="#555"/><rect x="281.5" y="25" width="10" height="1.2" fill="#ccc"/><rect x="217.5" y="28.5" width="75" height="2.5" fill="#3a3a3a"/><g transform="translate(217.5,31)"><rect width="75" height="58" fill="#ffffff"/>
<text x="17" y="13.5" font-family="Liberation Sans" font-weight="bold" font-size="11" fill="#2a2a2a" textLength="29" lengthAdjust="spacingAndGlyphs">HALF</text>
<text x="17" y="20.5" font-family="Liberation Sans" font-weight="bold" font-size="9" fill="#9a9a9a" textLength="36" lengthAdjust="spacingAndGlyphs">PRICE</text>
<rect x="41" y="20" width="11" height="2.6" fill="#3a3a3a"/>
<polygon points="3,27 20,27 11.5,37" fill="#d0d0d0"/>
<polygon points="35,52 52,30 70,52" fill="#e4e4e4"/>
<ellipse cx="25.5" cy="41" rx="4" ry="8" fill="#d8394b"/>
<circle cx="25" cy="31.5" r="2.6" fill="#5a4a45"/>
<ellipse cx="46.5" cy="40" rx="4" ry="11" fill="#d7935c"/>
<circle cx="47" cy="27.5" r="2.6" fill="#3e2e28"/></g><rect x="246.5" y="93" width="18" height="1.6" fill="#c8c8c8"/><rect x="224.5" y="97.5" width="61" height="6" rx="3" fill="#efefef"/><rect x="232.5" y="99.8" width="45" height="1.6" fill="#b4b4b4"/><rect x="305" y="21" width="80" height="87" fill="#ffffff"/><rect x="307" y="25" width="9" height="1.5" fill="#bbb"/><rect x="316" y="24.5" width="3" height="2.5" fill="#e5d98a"/><rect x="350" y="24.5" width="4" height="2.5" fill="#888"/><rect x="367" y="24.5" width="3" height="2.5" fill="#555"/><rect x="371" y="25" width="10" height="1.2" fill="#ccc"/><rect x="307" y="28.5" width="75" height="2.5" fill="#3a3a3a"/><g transform="translate(307,31)"><rect width="75" height="58" fill="#ffffff"/>
<polygon points="4,13 37.5,1.5 71,13 71,56 4,56" fill="#d9e0ca"/>
<path d="M2 13.5 L37.5 1 L73 13.5" fill="none" stroke="#8c9474" stroke-width="1.8"/>
<rect x="29" y="6" width="18" height="3.5" fill="#b8c2a4"/>
<line x1="3" y1="39.5" x2="72" y2="39.5" stroke="#7f8868" stroke-width="2"/>
<ellipse cx="19.5" cy="23.5" rx="9" ry="6" fill="#f6f8f4"/>
<ellipse cx="19.5" cy="23.5" rx="7" ry="2.8" fill="#7b9cc8"/>
<rect x="46" y="18" width="19" height="11" rx="4" fill="#f3f5ec"/>
<circle cx="50" cy="27" r="1" fill="#8a8f80"/><circle cx="56" cy="27" r="1" fill="#8a8f80"/><circle cx="62" cy="27" r="1" fill="#8a8f80"/>
<rect x="8" y="33" width="24" height="1.2" fill="#c4ccb4"/><rect x="43" y="33" width="24" height="1.2" fill="#c4ccb4"/>
<rect x="16" y="47" width="14" height="4" rx="1.5" fill="#9a7a52"/>
<rect x="18" y="51" width="12" height="2" fill="#e8e4d8"/>
<ellipse cx="56" cy="50" rx="9" ry="5.5" fill="#a6c84e"/>
<ellipse cx="56" cy="45" rx="7" ry="3" fill="#eef0ea"/></g><rect x="336" y="93" width="18" height="1.6" fill="#c8c8c8"/><rect x="314" y="97.5" width="61" height="6" rx="3" fill="#efefef"/><rect x="322" y="99.8" width="45" height="1.6" fill="#b4b4b4"/><rect x="128" y="115" width="80" height="87" fill="#ffffff"/><rect x="130" y="119" width="9" height="1.5" fill="#bbb"/><rect x="139" y="118.5" width="3" height="2.5" fill="#e5d98a"/><rect x="173" y="118.5" width="4" height="2.5" fill="#888"/><rect x="190" y="118.5" width="3" height="2.5" fill="#555"/><rect x="194" y="119" width="10" height="1.2" fill="#ccc"/><rect x="130" y="122.5" width="75" height="2.5" fill="#3a3a3a"/><g transform="translate(130,125)"><rect width="75" height="58" fill="#52614b"/>
<rect width="75" height="9" fill="#7eb7a6"/>
<ellipse cx="21" cy="8" rx="12" ry="6" fill="#d6a232"/>
<rect x="44" y="5" width="12" height="8" fill="#a83b31"/>
<text x="16" y="19.5" font-family="Liberation Sans" font-weight="bold" font-size="6" fill="#e6bd45" textLength="40" lengthAdjust="spacingAndGlyphs">GET READY</text>
<text x="12" y="25.5" font-family="Liberation Sans" font-weight="bold" font-size="6" fill="#e6bd45" textLength="48" lengthAdjust="spacingAndGlyphs">FOR SCHOOL</text>
<rect x="20" y="28" width="34" height="1.5" fill="#8a9a80"/>
<circle cx="11" cy="38" r="4" fill="#c95b51"/>
<rect x="6" y="42" width="10" height="8" fill="#d46a5a"/>
<rect x="26" y="36" width="38" height="2" fill="#d8dcd0"/>
<rect x="26" y="40" width="30" height="2" fill="#c8ccc0"/>
<rect y="51" width="75" height="7" fill="#2e5b42"/></g><rect x="159" y="187" width="18" height="1.6" fill="#c8c8c8"/><rect x="137" y="191.5" width="61" height="6" rx="3" fill="#efefef"/><rect x="145" y="193.8" width="45" height="1.6" fill="#b4b4b4"/><rect x="215.5" y="115" width="80" height="87" fill="#ffffff"/><rect x="216.5" y="117.5" width="10" height="1.8" fill="#888"/><rect x="227.5" y="117.5" width="14" height="1.8" fill="#c9c0c0"/><g transform="translate(217.0,123)"><rect width="78.5" height="60" fill="#ffffff"/>
<rect width="78.5" height="28" fill="#1d6db6"/>
<rect x="3" y="4" width="21" height="20" fill="#ffffff"/>
<rect x="3" y="4" width="21" height="8" fill="#eef2f6"/>
<text x="5.5" y="22.5" font-family="Liberation Sans" font-weight="bold" font-size="6.5" fill="#333" textLength="16" lengthAdjust="spacingAndGlyphs">10%</text>
<text x="40" y="7.5" font-family="Liberation Sans" font-weight="bold" font-size="5" fill="#8fd8e8" textLength="31" lengthAdjust="spacingAndGlyphs">How much</text>
<text x="44" y="13.5" font-family="Liberation Sans" font-weight="bold" font-size="7" fill="#f2f6fb" textLength="29" lengthAdjust="spacingAndGlyphs">will you</text>
<text x="37" y="20.5" font-family="Liberation Sans" font-weight="bold" font-size="8.5" fill="#ffffff" textLength="36" lengthAdjust="spacingAndGlyphs">save?</text>
<rect x="34" y="21" width="40" height="3" fill="#6cc150"/>
<polygon points="54,31 60,29 78.5,48 78.5,55" fill="#f0a445"/>
<rect x="7" y="33" width="29" height="3.5" fill="#2b5ba2"/>
<rect x="7" y="38" width="29" height="3.5" fill="#2b5ba2"/>
<rect x="7" y="44" width="40" height="1.6" fill="#9aa"/>
<rect x="7" y="47" width="28" height="1.6" fill="#9aa"/>
<rect x="47" y="51" width="22" height="5" rx="2" fill="#c77b32"/>
<rect x="15" y="53" width="12" height="3" fill="#333"/></g><rect x="246.5" y="187" width="18" height="1.6" fill="#c8c8c8"/><rect x="224.5" y="191.5" width="61" height="6" rx="3" fill="#efefef"/><rect x="232.5" y="193.8" width="45" height="1.6" fill="#b4b4b4"/><rect x="305" y="115" width="80" height="87" fill="#ffffff"/><rect x="307" y="119" width="9" height="1.5" fill="#bbb"/><rect x="316" y="118.5" width="3" height="2.5" fill="#e5d98a"/><rect x="350" y="118.5" width="4" height="2.5" fill="#888"/><rect x="367" y="118.5" width="3" height="2.5" fill="#555"/><rect x="371" y="119" width="10" height="1.2" fill="#ccc"/><rect x="307" y="122.5" width="75" height="2.5" fill="#3a3a3a"/><g transform="translate(307,125)"><rect width="75" height="60" fill="#2f3137"/>
<rect width="75" height="18" fill="#5a5c63"/>
<rect x="14" y="3" width="47" height="3" fill="#d8d8dc"/>
<rect x="20" y="10" width="36" height="6" fill="#8a8c94"/>
<polygon points="7,27 14,22 22,27 22,36 14,41 7,36" fill="#e8e6e6"/>
<polygon points="28,40 35,35 43,40 43,49 35,54 28,49" fill="#4c56a0"/>
<polygon points="49,40 56,35 63,40 63,49 56,54 49,49" fill="#e6dcd8"/>
<rect x="6" y="51" width="18" height="9" fill="#d4cfcc"/>
<rect x="34" y="52" width="20" height="8" fill="#b85a55"/>
<rect x="56" y="52" width="16" height="8" fill="#cfcfd2"/></g><rect x="336" y="187" width="18" height="1.6" fill="#c8c8c8"/><rect x="314" y="191.5" width="61" height="6" rx="3" fill="#efefef"/><rect x="322" y="193.8" width="45" height="1.6" fill="#b4b4b4"/></svg>
<!--/TPL-->
<div class="a" id="auto" style="left:1375px;top:826px;width:283px;height:160px;border:2px dotted #e36a7a;color:#161616;font-size:19px;text-align:center;-webkit-text-stroke:0.25px #161616">
<div style="height:34px;border-bottom:2px dotted #e36a7a;font-weight:bold;line-height:32px"><div style="transform:scaleX(1.075)">Automation</div></div>
<div style="line-height:31.6px;margin-top:-1.5px;transform:scaleX(1.075)">Send mailers to individual<br>person based on their<br>behavior. No need to create<br>bulky lists again-n-again. Set a</div>
</div>

<div id="botb" class="a"></div>
</div>
</body></html>
